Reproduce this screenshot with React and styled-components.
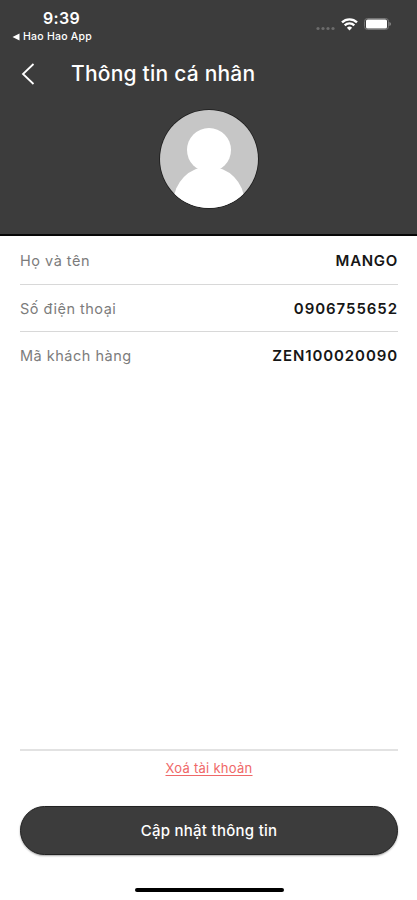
import React from 'react'
import styled, { createGlobalStyle } from 'styled-components'

const GlobalStyle = createGlobalStyle`
	* {
		box-sizing: border-box;
	}
	body {
		margin: 0;
		background: #fff;
		font-family: Inter, 'Liberation Sans', sans-serif;
	}
`

const Screen = styled.main`
	display: flex;
	flex-direction: column;
	width: 417px;
	height: 900px;
	background: #fff;
	overflow: hidden;
`

const Header = styled.header`
	display: flex;
	flex-direction: column;
	height: 236px;
	background: #3c3c3c;
	border-bottom: 2px solid #060606;
	color: #fff;
`

const StatusBar = styled.div`
	display: flex;
	justify-content: space-between;
	height: 50px;
	padding: 9px 26px 0 12px;
`

const StatusLeft = styled.div`
	display: flex;
	flex-direction: column;
`

const Clock = styled.span`
	padding-left: 31px;
	font-size: 16px;
	font-weight: 600;
	line-height: 18px;
	letter-spacing: 0.3px;
`

const BackToApp = styled.span`
	display: flex;
	align-items: center;
	gap: 3px;
	margin-top: 3px;
	font-size: 10.5px;
	font-weight: 500;
	line-height: 14px;
	letter-spacing: 0.25px;
`

const StatusIcons = styled.div`
	display: flex;
	padding-top: 7px;
	height: 24px;
`

const TitleBar = styled.div`
	display: flex;
	align-items: center;
	height: 48px;
	padding-left: 20px;

	h1 {
		margin: 0 0 0 35px;
		font-size: 21px;
		font-weight: 500;
		line-height: 28px;
		letter-spacing: 0.22px;
	}
`

const BackButton = styled.button`
	display: flex;
	padding: 0;
	border: 0;
	background: none;
	color: #fff;
`

const Avatar = styled.svg`
	display: block;
	margin: 11px 0 0 159px;
`

const InfoList = styled.dl`
	flex: 1;
	margin: 0 19px 0 20px;
`

const InfoRow = styled.div`
	display: flex;
	justify-content: space-between;
	align-items: center;
	height: ${(props) => props.$height}px;
	border-bottom: ${(props) => (props.$last ? '0' : '1px solid #d8d8d8')};
	font-size: 14.5px;

	dt {
		color: #7c7c7c;
		letter-spacing: 0.5px;
	}
	dd {
		margin: 0;
		color: #161616;
		font-size: 15px;
		font-weight: 600;
		letter-spacing: ${(props) => props.$spacing}px;
	}
`

const Footer = styled.footer`
	display: flex;
	flex-direction: column;
	align-items: center;
	height: 151px;
	margin: 0 19px 0 20px;
	border-top: 2px solid #e2e2e2;
`

const DeleteLink = styled.a`
	margin-top: 8px;
	color: #ef6868;
	font-size: 13px;
	line-height: 18px;
	letter-spacing: 0.27px;
	text-decoration: underline;
	text-underline-offset: 2px;
`

const UpdateButton = styled.button`
	width: 100%;
	height: 49px;
	margin-top: 29px;
	padding: 0;
	border: 1px solid #222;
	border-radius: 25px;
	background: #3c3c3c;
	box-shadow: 0 1px 2px rgba(0, 0, 0, 0.35);
	color: #fff;
	font-family: inherit;
	font-size: 15px;
	font-weight: 500;
	letter-spacing: 0.27px;
`

const HomeIndicator = styled.div`
	width: 149px;
	height: 4px;
	margin-top: 33px;
	border-radius: 2px;
	background: #000;
`

const details = [
	{ label: 'Họ và tên', value: 'MANGO', height: 49, spacing: 0.7 },
	{ label: 'Số điện thoại', value: '0906755652', height: 47, spacing: 0.95 },
	{ label: 'Mã khách hàng', value: 'ZEN100020090', height: 47, spacing: 0.9 },
]

function PhoneStatus() {
	return (
		<StatusBar>
			<StatusLeft>
				<Clock>9:39</Clock>
				<BackToApp>
					<svg width="8" height="8" viewBox="0 0 8 8" fill="#fff">
						<path d="M7.5 .6V7.4L.5 4z" />
					</svg>
					Hao Hao App
				</BackToApp>
			</StatusLeft>
			<StatusIcons>
				<svg width="76" height="16" viewBox="315 16 76 16">
					<g fill="#6c6c6c">
						<circle cx="318" cy="28.5" r="1.6" />
						<circle cx="323" cy="28.5" r="1.6" />
						<circle cx="328" cy="28.5" r="1.6" />
						<circle cx="333" cy="28.5" r="1.6" />
					</g>
					<g fill="none" stroke="#fff" strokeWidth="2.3">
						<path d="M342 22.4a10.6 10.6 0 0 1 15 0" />
						<path d="M344.7 25.4a6.8 6.8 0 0 1 9.6 0" />
					</g>
					<path d="M346.9 27.8a3.7 3.7 0 0 1 5.2 0L349.5 30.6z" fill="#fff" />
					<rect x="364.5" y="18.5" width="24" height="11" rx="3" fill="none" stroke="#757575" />
					<rect x="366" y="19.5" width="21" height="9" rx="1.6" fill="#fff" />
					<path d="M389.5 22v4q1.3-.7 1.3-2t-1.3-2z" fill="#999" />
				</svg>
			</StatusIcons>
		</StatusBar>
	)
}

export default function App() {
	return (
		<>
			<GlobalStyle />
			<Screen>
				<Header>
					<PhoneStatus />
					<TitleBar>
						<BackButton aria-label="Back">
							<svg width="16" height="22" viewBox="0 0 16 22" fill="none" stroke="#fff" strokeWidth="1.8">
								<path d="M13.5 1L3 11L13.5 21" />
							</svg>
						</BackButton>
						<h1>Thông tin cá nhân</h1>
					</TitleBar>
					<Avatar width="100" height="100" viewBox="0 0 100 100">
						<clipPath id="avatar">
							<circle cx="50" cy="50" r="49" />
						</clipPath>
						<circle cx="50" cy="50" r="49.8" fill="#1c1c1c" />
						<g clipPath="url(#avatar)">
							<rect width="100" height="100" fill="#c6c6c6" />
							<circle cx="50" cy="41" r="22" fill="#fff" />
							<circle cx="50" cy="93" r="35.5" fill="#fff" />
						</g>
					</Avatar>
				</Header>
				<InfoList>
					{details.map(({ label, value, height, spacing }, index) => (
						<InfoRow
							key={label}
							$height={height}
							$spacing={spacing}
							$last={index === details.length - 1}
						>
							<dt>{label}</dt>
							<dd>{value}</dd>
						</InfoRow>
					))}
				</InfoList>
				<Footer>
					<DeleteLink>Xoá tài khoản</DeleteLink>
					<UpdateButton>Cập nhật thông tin</UpdateButton>
					<HomeIndicator />
				</Footer>
			</Screen>
		</>
	)
}
